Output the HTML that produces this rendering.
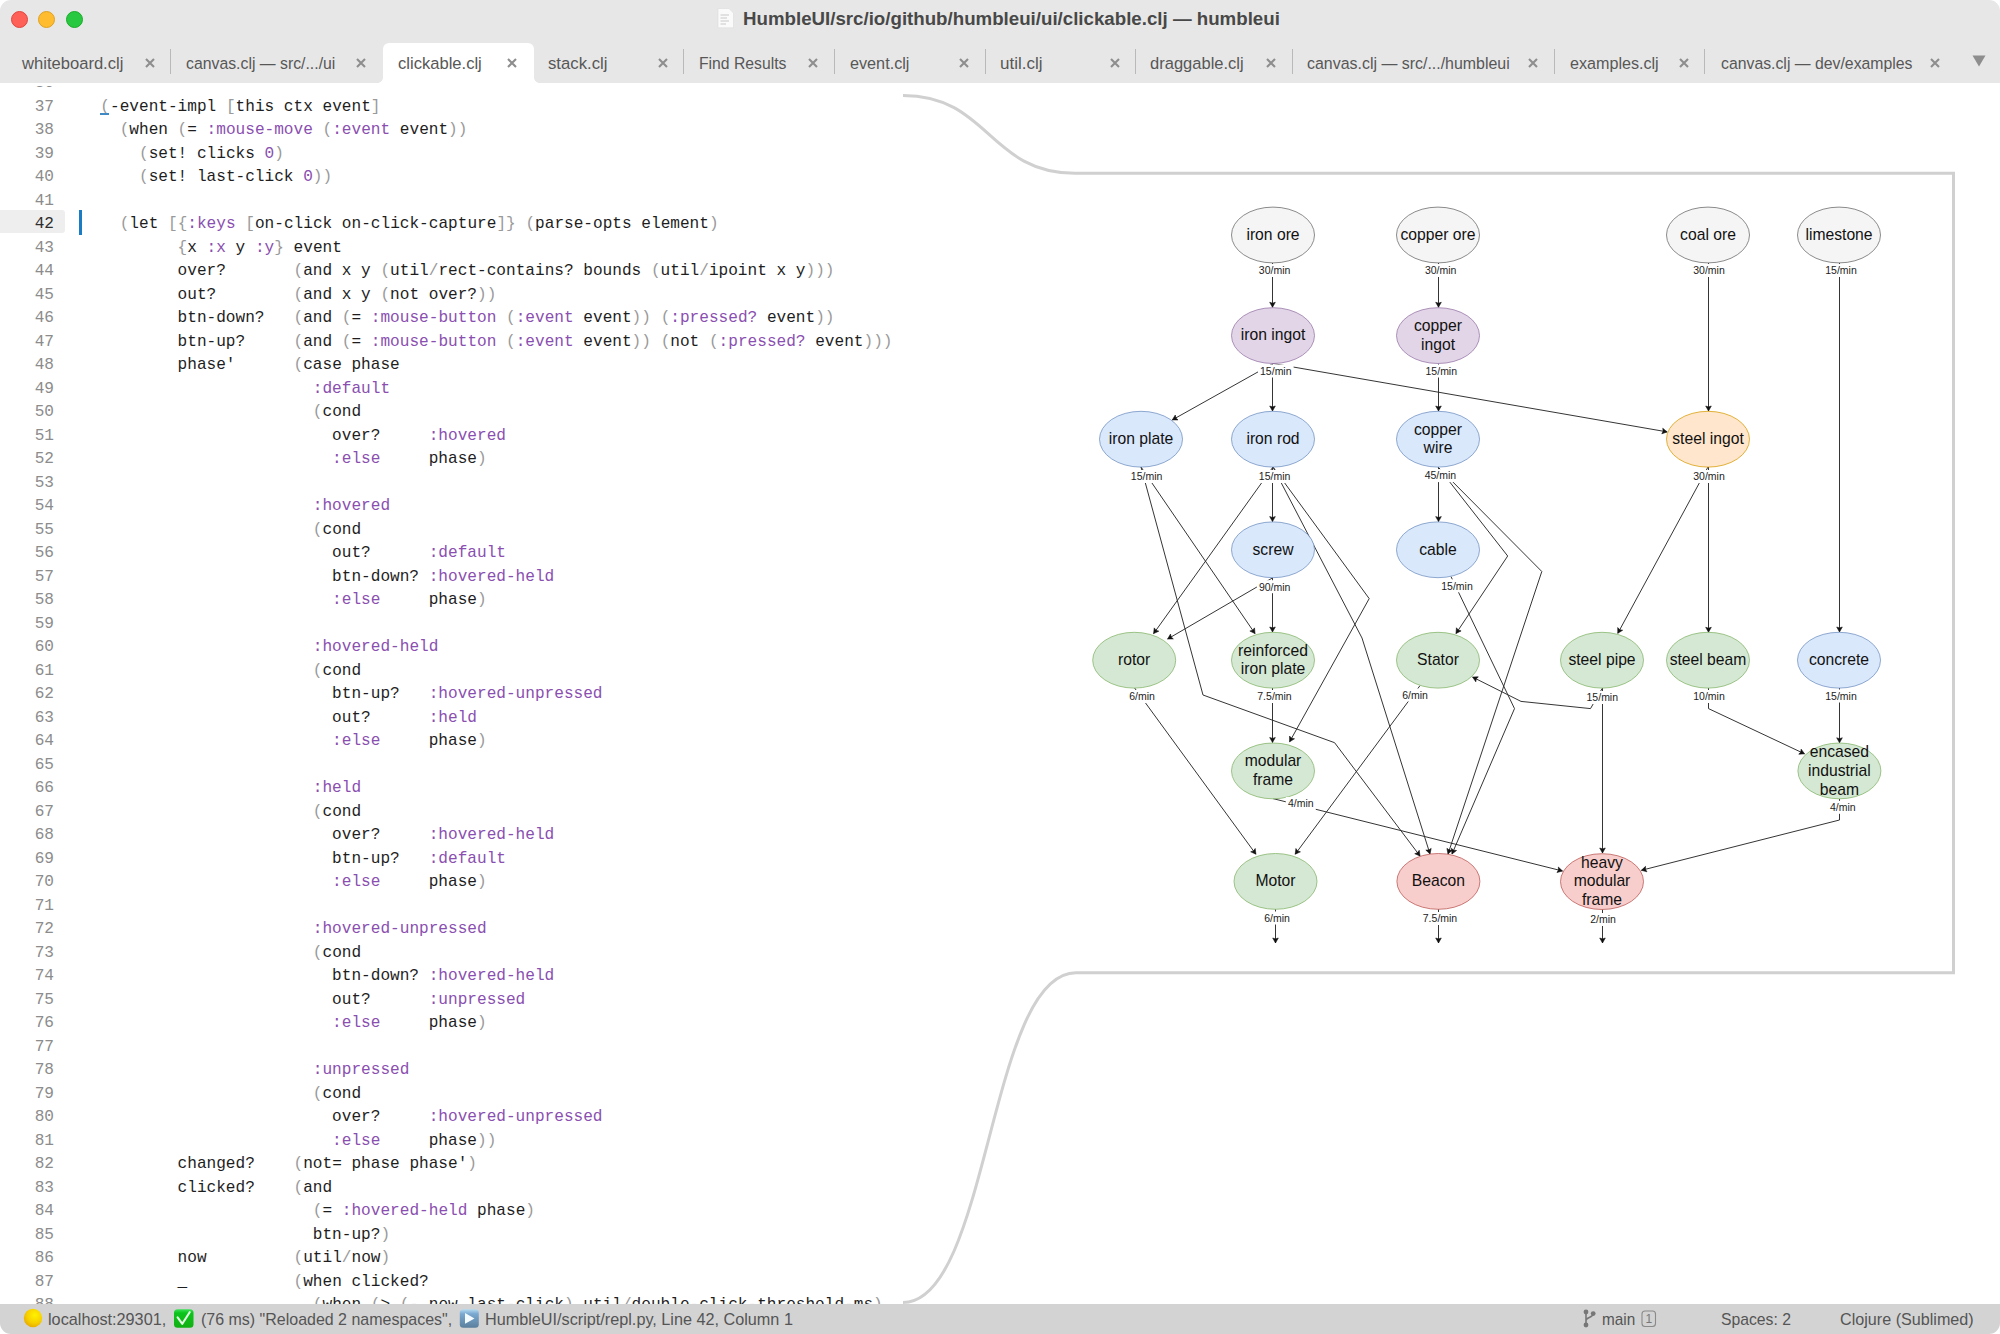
<!DOCTYPE html>
<html><head><meta charset="utf-8"><style>
*{margin:0;padding:0;box-sizing:border-box}
html,body{width:2000px;height:1334px;overflow:hidden;background:#fff}
body{position:relative;font-family:"Liberation Sans",sans-serif}
#top{position:absolute;z-index:1;left:0;top:0;width:2000px;height:83px;background:#e7e7e7;border-radius:11px 11px 0 0}
.dot{position:absolute;z-index:2;top:10.5px;width:17px;height:17px;border-radius:50%}
#title{position:absolute;z-index:2;top:8.5px;left:743px;font-weight:bold;font-size:17.6px;color:#484848;white-space:nowrap;letter-spacing:0;transform-origin:0 0;transform:scaleX(1.0622)}
.tt{position:absolute;z-index:2;top:53.5px;font-size:16.3px;color:#575757;white-space:nowrap;transform-origin:0 0}
.xs{position:absolute;z-index:2;top:57px}
.tx{position:absolute;z-index:2;top:54px;font-size:12px;color:#8a8a8a;width:12px;text-align:center;font-weight:bold}
.sep{position:absolute;z-index:2;top:49px;height:25px;width:1px;background:#b9b9b9}
#act{position:absolute;z-index:2;left:383px;top:43px;width:151px;height:41px;background:#fff;border-radius:6px 6px 0 0}
.ln{position:absolute;left:0;width:54px;text-align:right;font-family:"Liberation Mono",monospace;font-size:16.1px;line-height:23.5px;height:23.5px;color:#8c8c8c}
.cl{position:absolute;left:81px;font-family:"Liberation Mono",monospace;font-size:16.1px;line-height:23.5px;height:23.5px;color:#1e1e1e;white-space:pre}
.cl i{font-style:normal;color:#9a9a9a}
.cl b{font-weight:normal;color:#8a4fb0}
#hl42{position:absolute;left:0;top:210px;width:65px;height:23px;background:#eeeeee;border-radius:0 3px 3px 0}
.ln.act{color:#2e2e2e}
.ear{position:absolute;z-index:2;top:78px;width:5px;height:5px}
#caret{position:absolute;left:79px;top:210px;width:3px;height:25px;background:#1a7cc2}
#status{position:absolute;z-index:3;left:0;top:1304px;width:2000px;height:30px;background:#d3d3d3;border-radius:0 0 11px 11px}
.st{position:absolute;z-index:4;top:1310px;font-size:16.1px;color:#555;white-space:nowrap;transform-origin:0 0}
svg{position:absolute;left:0;top:0}
.ico{z-index:5}
#ul37{position:absolute;left:99.5px;top:113px;width:9.3px;height:1.8px;background:#3f8ac4;z-index:1}
#wstrip{position:absolute;left:0;top:83px;width:900px;height:2.6px;background:#fff;z-index:1}
</style></head><body>
<div id="top"></div><div id="wstrip"></div>
<div class="dot" style="left:10.5px;background:#fe5f57;border:0.5px solid #e0443e"></div>
<div class="dot" style="left:38.2px;background:#febc2e;border:0.5px solid #dea123"></div>
<div class="dot" style="left:65.8px;background:#28c840;border:0.5px solid #1aab29"></div>
<div id="title">HumbleUI/src/io/github/humbleui/ui/clickable.clj — humbleui</div>
<div id="act"></div><div class="ear" style="left:378px;background:radial-gradient(circle at 0 0,#e7e7e7 4.5px,#fff 5px)"></div><div class="ear" style="left:534px;background:radial-gradient(circle at 100% 0,#e7e7e7 4.5px,#fff 5px)"></div>
<div class="tt" style="left:22.1px;transform:scaleX(1.0185)">whiteboard.clj</div><svg class="xs" style="left:143.8px" width="12" height="12" viewBox="0 0 12 12"><path d="M2 2L10 10M10 2L2 10" stroke="#8e8e8e" stroke-width="2.1" stroke-linecap="butt"/></svg><div class="tt" style="left:186.0px;transform:scaleX(0.9709)">canvas.clj — src/.../ui</div><svg class="xs" style="left:355.2px" width="12" height="12" viewBox="0 0 12 12"><path d="M2 2L10 10M10 2L2 10" stroke="#8e8e8e" stroke-width="2.1" stroke-linecap="butt"/></svg><div class="tt" style="left:398.0px;transform:scaleX(1.0178)">clickable.clj</div><svg class="xs" style="left:505.7px" width="12" height="12" viewBox="0 0 12 12"><path d="M2 2L10 10M10 2L2 10" stroke="#8e8e8e" stroke-width="2.1" stroke-linecap="butt"/></svg><div class="tt" style="left:548.2px;transform:scaleX(1.0265)">stack.clj</div><svg class="xs" style="left:656.6px" width="12" height="12" viewBox="0 0 12 12"><path d="M2 2L10 10M10 2L2 10" stroke="#8e8e8e" stroke-width="2.1" stroke-linecap="butt"/></svg><div class="tt" style="left:698.9px;transform:scaleX(0.9659)">Find Results</div><svg class="xs" style="left:807.3px" width="12" height="12" viewBox="0 0 12 12"><path d="M2 2L10 10M10 2L2 10" stroke="#8e8e8e" stroke-width="2.1" stroke-linecap="butt"/></svg><div class="tt" style="left:849.9px;transform:scaleX(0.9951)">event.clj</div><svg class="xs" style="left:957.6px" width="12" height="12" viewBox="0 0 12 12"><path d="M2 2L10 10M10 2L2 10" stroke="#8e8e8e" stroke-width="2.1" stroke-linecap="butt"/></svg><div class="tt" style="left:1000.2px;transform:scaleX(1.0427)">util.clj</div><svg class="xs" style="left:1108.6px" width="12" height="12" viewBox="0 0 12 12"><path d="M2 2L10 10M10 2L2 10" stroke="#8e8e8e" stroke-width="2.1" stroke-linecap="butt"/></svg><div class="tt" style="left:1150.4px;transform:scaleX(1.0149)">draggable.clj</div><svg class="xs" style="left:1264.5px" width="12" height="12" viewBox="0 0 12 12"><path d="M2 2L10 10M10 2L2 10" stroke="#8e8e8e" stroke-width="2.1" stroke-linecap="butt"/></svg><div class="tt" style="left:1307.2px;transform:scaleX(0.9786)">canvas.clj — src/.../humbleui</div><svg class="xs" style="left:1527.2px" width="12" height="12" viewBox="0 0 12 12"><path d="M2 2L10 10M10 2L2 10" stroke="#8e8e8e" stroke-width="2.1" stroke-linecap="butt"/></svg><div class="tt" style="left:1569.8px;transform:scaleX(0.9902)">examples.clj</div><svg class="xs" style="left:1678.0px" width="12" height="12" viewBox="0 0 12 12"><path d="M2 2L10 10M10 2L2 10" stroke="#8e8e8e" stroke-width="2.1" stroke-linecap="butt"/></svg><div class="tt" style="left:1720.7px;transform:scaleX(0.9707)">canvas.clj — dev/examples</div><svg class="xs" style="left:1929.4px" width="12" height="12" viewBox="0 0 12 12"><path d="M2 2L10 10M10 2L2 10" stroke="#8e8e8e" stroke-width="2.1" stroke-linecap="butt"/></svg><div class="sep" style="left:170.3px"></div><div class="sep" style="left:683.2px"></div><div class="sep" style="left:833.5px"></div><div class="sep" style="left:984.8px"></div><div class="sep" style="left:1135.2px"></div><div class="sep" style="left:1291.5px"></div><div class="sep" style="left:1554.0px"></div><div class="sep" style="left:1704.1px"></div><svg class="xs" style="left:1972px;top:55px" width="14" height="12" viewBox="0 0 14 12"><path d="M0.5 0.5L13.5 0.5L7 11.5Z" fill="#8e8e8e"/></svg>
<div id="hl42"></div>
<div class="ln" style="top:72.1px">36</div><div class="ln" style="top:95.6px">37</div><div class="cl" style="top:95.6px">  <i>(</i>-event-impl <i>[</i>this ctx event<i>]</i></div><div class="ln" style="top:119.1px">38</div><div class="cl" style="top:119.1px">    <i>(</i>when <i>(</i>= <b>:mouse-move</b> <i>(</i><b>:event</b> event<i>)</i><i>)</i></div><div class="ln" style="top:142.6px">39</div><div class="cl" style="top:142.6px">      <i>(</i>set! clicks <b>0</b><i>)</i></div><div class="ln" style="top:166.1px">40</div><div class="cl" style="top:166.1px">      <i>(</i>set! last-click <b>0</b><i>)</i><i>)</i></div><div class="ln" style="top:189.6px">41</div><div class="cl" style="top:189.6px"></div><div class="ln act" style="top:213.1px">42</div><div class="cl" style="top:213.1px">    <i>(</i>let <i>[</i><i>{</i><b>:keys</b> <i>[</i>on-click on-click-capture<i>]</i><i>}</i> <i>(</i>parse-opts element<i>)</i></div><div class="ln" style="top:236.6px">43</div><div class="cl" style="top:236.6px">          <i>{</i>x <b>:x</b> y <b>:y</b><i>}</i> event</div><div class="ln" style="top:260.1px">44</div><div class="cl" style="top:260.1px">          over?       <i>(</i>and x y <i>(</i>util<i>/</i>rect-contains? bounds <i>(</i>util<i>/</i>ipoint x y<i>)</i><i>)</i><i>)</i></div><div class="ln" style="top:283.6px">45</div><div class="cl" style="top:283.6px">          out?        <i>(</i>and x y <i>(</i>not over?<i>)</i><i>)</i></div><div class="ln" style="top:307.1px">46</div><div class="cl" style="top:307.1px">          btn-down?   <i>(</i>and <i>(</i>= <b>:mouse-button</b> <i>(</i><b>:event</b> event<i>)</i><i>)</i> <i>(</i><b>:pressed?</b> event<i>)</i><i>)</i></div><div class="ln" style="top:330.6px">47</div><div class="cl" style="top:330.6px">          btn-up?     <i>(</i>and <i>(</i>= <b>:mouse-button</b> <i>(</i><b>:event</b> event<i>)</i><i>)</i> <i>(</i>not <i>(</i><b>:pressed?</b> event<i>)</i><i>)</i><i>)</i></div><div class="ln" style="top:354.1px">48</div><div class="cl" style="top:354.1px">          phase&#x27;      <i>(</i>case phase</div><div class="ln" style="top:377.6px">49</div><div class="cl" style="top:377.6px">                        <b>:default</b></div><div class="ln" style="top:401.1px">50</div><div class="cl" style="top:401.1px">                        <i>(</i>cond</div><div class="ln" style="top:424.6px">51</div><div class="cl" style="top:424.6px">                          over?     <b>:hovered</b></div><div class="ln" style="top:448.1px">52</div><div class="cl" style="top:448.1px">                          <b>:else</b>     phase<i>)</i></div><div class="ln" style="top:471.6px">53</div><div class="cl" style="top:471.6px"></div><div class="ln" style="top:495.1px">54</div><div class="cl" style="top:495.1px">                        <b>:hovered</b></div><div class="ln" style="top:518.6px">55</div><div class="cl" style="top:518.6px">                        <i>(</i>cond</div><div class="ln" style="top:542.1px">56</div><div class="cl" style="top:542.1px">                          out?      <b>:default</b></div><div class="ln" style="top:565.6px">57</div><div class="cl" style="top:565.6px">                          btn-down? <b>:hovered-held</b></div><div class="ln" style="top:589.1px">58</div><div class="cl" style="top:589.1px">                          <b>:else</b>     phase<i>)</i></div><div class="ln" style="top:612.6px">59</div><div class="cl" style="top:612.6px"></div><div class="ln" style="top:636.1px">60</div><div class="cl" style="top:636.1px">                        <b>:hovered-held</b></div><div class="ln" style="top:659.6px">61</div><div class="cl" style="top:659.6px">                        <i>(</i>cond</div><div class="ln" style="top:683.1px">62</div><div class="cl" style="top:683.1px">                          btn-up?   <b>:hovered-unpressed</b></div><div class="ln" style="top:706.6px">63</div><div class="cl" style="top:706.6px">                          out?      <b>:held</b></div><div class="ln" style="top:730.1px">64</div><div class="cl" style="top:730.1px">                          <b>:else</b>     phase<i>)</i></div><div class="ln" style="top:753.6px">65</div><div class="cl" style="top:753.6px"></div><div class="ln" style="top:777.1px">66</div><div class="cl" style="top:777.1px">                        <b>:held</b></div><div class="ln" style="top:800.6px">67</div><div class="cl" style="top:800.6px">                        <i>(</i>cond</div><div class="ln" style="top:824.1px">68</div><div class="cl" style="top:824.1px">                          over?     <b>:hovered-held</b></div><div class="ln" style="top:847.6px">69</div><div class="cl" style="top:847.6px">                          btn-up?   <b>:default</b></div><div class="ln" style="top:871.1px">70</div><div class="cl" style="top:871.1px">                          <b>:else</b>     phase<i>)</i></div><div class="ln" style="top:894.6px">71</div><div class="cl" style="top:894.6px"></div><div class="ln" style="top:918.1px">72</div><div class="cl" style="top:918.1px">                        <b>:hovered-unpressed</b></div><div class="ln" style="top:941.6px">73</div><div class="cl" style="top:941.6px">                        <i>(</i>cond</div><div class="ln" style="top:965.1px">74</div><div class="cl" style="top:965.1px">                          btn-down? <b>:hovered-held</b></div><div class="ln" style="top:988.6px">75</div><div class="cl" style="top:988.6px">                          out?      <b>:unpressed</b></div><div class="ln" style="top:1012.1px">76</div><div class="cl" style="top:1012.1px">                          <b>:else</b>     phase<i>)</i></div><div class="ln" style="top:1035.6px">77</div><div class="cl" style="top:1035.6px"></div><div class="ln" style="top:1059.1px">78</div><div class="cl" style="top:1059.1px">                        <b>:unpressed</b></div><div class="ln" style="top:1082.6px">79</div><div class="cl" style="top:1082.6px">                        <i>(</i>cond</div><div class="ln" style="top:1106.1px">80</div><div class="cl" style="top:1106.1px">                          over?     <b>:hovered-unpressed</b></div><div class="ln" style="top:1129.6px">81</div><div class="cl" style="top:1129.6px">                          <b>:else</b>     phase<i>)</i><i>)</i></div><div class="ln" style="top:1153.1px">82</div><div class="cl" style="top:1153.1px">          changed?    <i>(</i>not= phase phase&#x27;<i>)</i></div><div class="ln" style="top:1176.6px">83</div><div class="cl" style="top:1176.6px">          clicked?    <i>(</i>and</div><div class="ln" style="top:1200.1px">84</div><div class="cl" style="top:1200.1px">                        <i>(</i>= <b>:hovered-held</b> phase<i>)</i></div><div class="ln" style="top:1223.6px">85</div><div class="cl" style="top:1223.6px">                        btn-up?<i>)</i></div><div class="ln" style="top:1247.1px">86</div><div class="cl" style="top:1247.1px">          now         <i>(</i>util<i>/</i>now<i>)</i></div><div class="ln" style="top:1270.6px">87</div><div class="cl" style="top:1270.6px">          _           <i>(</i>when clicked?</div><div class="ln" style="top:1294.1px">88</div><div class="cl" style="top:1294.1px">                        <i>(</i>when <i>(</i>&gt; <i>(</i>- now last-click<i>)</i> util<i>/</i>double-click-threshold-ms<i>)</i></div>
<div id="caret"></div>
<svg width="2000" height="1334" viewBox="0 0 2000 1334">
<path d="M903 95.5 C989 95.5 989 173.3 1075 173.3 L1953.5 173.3 L1953.5 972.8 L1076 972.8 C989 972.8 989 1302.5 903 1302.5" fill="none" stroke="#d0d0d0" stroke-width="3"/>
<path d="M1272.5 263.0 L1272.5 307.3" fill="none" stroke="#2a2a2a" stroke-width="0.95"/>
<path d="M1272.50 307.30 L1269.70 302.30 L1272.50 303.20 L1275.30 302.30 Z" fill="#111" stroke="#111" stroke-width="0.6"/>
<path d="M1438.5 263.0 L1438.5 307.3" fill="none" stroke="#2a2a2a" stroke-width="0.95"/>
<path d="M1438.50 307.30 L1435.70 302.30 L1438.50 303.20 L1441.30 302.30 Z" fill="#111" stroke="#111" stroke-width="0.6"/>
<path d="M1708.5 263.0 L1708.5 411.0" fill="none" stroke="#2a2a2a" stroke-width="0.95"/>
<path d="M1708.50 411.00 L1705.70 406.00 L1708.50 406.90 L1711.30 406.00 Z" fill="#111" stroke="#111" stroke-width="0.6"/>
<path d="M1839.5 263.0 L1839.5 632.0" fill="none" stroke="#2a2a2a" stroke-width="0.95"/>
<path d="M1839.50 632.00 L1836.70 627.00 L1839.50 627.90 L1842.30 627.00 Z" fill="#111" stroke="#111" stroke-width="0.6"/>
<path d="M1273.0 363.5 L1172.3 419.9" fill="none" stroke="#2a2a2a" stroke-width="0.95"/>
<path d="M1172.30 419.90 L1175.29 415.01 L1175.88 417.90 L1178.03 419.90 Z" fill="#111" stroke="#111" stroke-width="0.6"/>
<path d="M1272.5 363.5 L1272.5 411.0" fill="none" stroke="#2a2a2a" stroke-width="0.95"/>
<path d="M1272.50 411.00 L1269.70 406.00 L1272.50 406.90 L1275.30 406.00 Z" fill="#111" stroke="#111" stroke-width="0.6"/>
<path d="M1273.0 363.5 L1667.2 431.9" fill="none" stroke="#2a2a2a" stroke-width="0.95"/>
<path d="M1667.20 431.90 L1661.79 433.80 L1663.16 431.20 L1662.75 428.29 Z" fill="#111" stroke="#111" stroke-width="0.6"/>
<path d="M1438.5 363.5 L1438.5 411.0" fill="none" stroke="#2a2a2a" stroke-width="0.95"/>
<path d="M1438.50 411.00 L1435.70 406.00 L1438.50 406.90 L1441.30 406.00 Z" fill="#111" stroke="#111" stroke-width="0.6"/>
<path d="M1141.0 467.0 L1255.0 633.6" fill="none" stroke="#2a2a2a" stroke-width="0.95"/>
<path d="M1255.00 633.60 L1249.87 631.05 L1252.68 630.22 L1254.49 627.89 Z" fill="#111" stroke="#111" stroke-width="0.6"/>
<path d="M1141.0 467.0 L1203.0 695.0 L1334.6 742.7 L1420.0 856.0" fill="none" stroke="#2a2a2a" stroke-width="0.95"/>
<path d="M1420.00 856.00 L1414.75 853.69 L1417.53 852.73 L1419.23 850.32 Z" fill="#111" stroke="#111" stroke-width="0.6"/>
<path d="M1272.5 467.0 L1272.5 521.6" fill="none" stroke="#2a2a2a" stroke-width="0.95"/>
<path d="M1272.50 521.60 L1269.70 516.60 L1272.50 517.50 L1275.30 516.60 Z" fill="#111" stroke="#111" stroke-width="0.6"/>
<path d="M1273.0 467.0 L1153.6 633.6" fill="none" stroke="#2a2a2a" stroke-width="0.95"/>
<path d="M1153.60 633.60 L1154.24 627.90 L1155.99 630.27 L1158.79 631.17 Z" fill="#111" stroke="#111" stroke-width="0.6"/>
<path d="M1273.0 467.0 L1369.2 598.6 L1289.6 741.8" fill="none" stroke="#2a2a2a" stroke-width="0.95"/>
<path d="M1289.60 741.80 L1289.58 736.07 L1291.59 738.22 L1294.48 738.79 Z" fill="#111" stroke="#111" stroke-width="0.6"/>
<path d="M1273.0 467.0 L1362.0 638.0 L1430.0 854.0" fill="none" stroke="#2a2a2a" stroke-width="0.95"/>
<path d="M1430.00 854.00 L1425.83 850.07 L1428.77 850.09 L1431.17 848.39 Z" fill="#111" stroke="#111" stroke-width="0.6"/>
<path d="M1438.5 467.0 L1438.5 521.6" fill="none" stroke="#2a2a2a" stroke-width="0.95"/>
<path d="M1438.50 521.60 L1435.70 516.60 L1438.50 517.50 L1441.30 516.60 Z" fill="#111" stroke="#111" stroke-width="0.6"/>
<path d="M1438.0 467.0 L1507.7 556.0 L1456.0 633.5" fill="none" stroke="#2a2a2a" stroke-width="0.95"/>
<path d="M1456.00 633.50 L1456.45 627.79 L1458.28 630.09 L1461.10 630.89 Z" fill="#111" stroke="#111" stroke-width="0.6"/>
<path d="M1438.0 467.0 L1541.8 571.5 L1448.0 854.0" fill="none" stroke="#2a2a2a" stroke-width="0.95"/>
<path d="M1448.00 854.00 L1446.92 848.37 L1449.29 850.11 L1452.23 850.14 Z" fill="#111" stroke="#111" stroke-width="0.6"/>
<path d="M1708.0 467.0 L1617.8 633.3" fill="none" stroke="#2a2a2a" stroke-width="0.95"/>
<path d="M1617.80 633.30 L1617.72 627.57 L1619.75 629.70 L1622.65 630.24 Z" fill="#111" stroke="#111" stroke-width="0.6"/>
<path d="M1708.5 467.0 L1708.5 632.3" fill="none" stroke="#2a2a2a" stroke-width="0.95"/>
<path d="M1708.50 632.30 L1705.70 627.30 L1708.50 628.20 L1711.30 627.30 Z" fill="#111" stroke="#111" stroke-width="0.6"/>
<path d="M1272.5 577.6 L1272.5 632.0" fill="none" stroke="#2a2a2a" stroke-width="0.95"/>
<path d="M1272.50 632.00 L1269.70 627.00 L1272.50 627.90 L1275.30 627.00 Z" fill="#111" stroke="#111" stroke-width="0.6"/>
<path d="M1273.0 577.6 L1167.6 639.0" fill="none" stroke="#2a2a2a" stroke-width="0.95"/>
<path d="M1167.60 639.00 L1170.51 634.06 L1171.14 636.94 L1173.33 638.90 Z" fill="#111" stroke="#111" stroke-width="0.6"/>
<path d="M1451.0 576.6 L1514.5 708.6 L1452.0 854.0" fill="none" stroke="#2a2a2a" stroke-width="0.95"/>
<path d="M1452.00 854.00 L1451.40 848.30 L1453.62 850.23 L1456.55 850.51 Z" fill="#111" stroke="#111" stroke-width="0.6"/>
<path d="M1134.6 688.0 L1255.9 854.2" fill="none" stroke="#2a2a2a" stroke-width="0.95"/>
<path d="M1255.90 854.20 L1250.69 851.81 L1253.48 850.89 L1255.21 848.51 Z" fill="#111" stroke="#111" stroke-width="0.6"/>
<path d="M1272.5 688.0 L1272.5 742.5" fill="none" stroke="#2a2a2a" stroke-width="0.95"/>
<path d="M1272.50 742.50 L1269.70 737.50 L1272.50 738.40 L1275.30 737.50 Z" fill="#111" stroke="#111" stroke-width="0.6"/>
<path d="M1420.0 685.6 L1295.2 854.2" fill="none" stroke="#2a2a2a" stroke-width="0.95"/>
<path d="M1295.20 854.20 L1295.92 848.52 L1297.64 850.90 L1300.43 851.85 Z" fill="#111" stroke="#111" stroke-width="0.6"/>
<path d="M1602.2 688.4 L1590.5 708.6 L1521.0 701.4 L1472.6 677.1" fill="none" stroke="#2a2a2a" stroke-width="0.95"/>
<path d="M1472.60 677.10 L1478.32 676.84 L1476.26 678.94 L1475.81 681.85 Z" fill="#111" stroke="#111" stroke-width="0.6"/>
<path d="M1602.5 688.0 L1602.5 853.0" fill="none" stroke="#2a2a2a" stroke-width="0.95"/>
<path d="M1602.50 853.00 L1599.70 848.00 L1602.50 848.90 L1605.30 848.00 Z" fill="#111" stroke="#111" stroke-width="0.6"/>
<path d="M1708.5 688.0 L1708.5 708.6 L1804.5 753.8" fill="none" stroke="#2a2a2a" stroke-width="0.95"/>
<path d="M1804.50 753.80 L1798.78 754.20 L1800.79 752.05 L1801.17 749.14 Z" fill="#111" stroke="#111" stroke-width="0.6"/>
<path d="M1839.5 688.0 L1839.5 742.8" fill="none" stroke="#2a2a2a" stroke-width="0.95"/>
<path d="M1839.50 742.80 L1836.70 737.80 L1839.50 738.70 L1842.30 737.80 Z" fill="#111" stroke="#111" stroke-width="0.6"/>
<path d="M1273.0 798.6 L1562.5 871.0" fill="none" stroke="#2a2a2a" stroke-width="0.95"/>
<path d="M1562.50 871.00 L1556.97 872.50 L1558.52 870.01 L1558.33 867.07 Z" fill="#111" stroke="#111" stroke-width="0.6"/>
<path d="M1839.5 798.8 L1839.5 820.0 L1641.4 870.3" fill="none" stroke="#2a2a2a" stroke-width="0.95"/>
<path d="M1641.40 870.30 L1645.56 866.36 L1645.37 869.29 L1646.94 871.78 Z" fill="#111" stroke="#111" stroke-width="0.6"/>
<path d="M1275.5 909.2 L1275.5 943.0" fill="none" stroke="#2a2a2a" stroke-width="0.95"/>
<path d="M1275.50 943.00 L1272.70 938.00 L1275.50 938.90 L1278.30 938.00 Z" fill="#111" stroke="#111" stroke-width="0.6"/>
<path d="M1438.5 909.2 L1438.5 943.0" fill="none" stroke="#2a2a2a" stroke-width="0.95"/>
<path d="M1438.50 943.00 L1435.70 938.00 L1438.50 938.90 L1441.30 938.00 Z" fill="#111" stroke="#111" stroke-width="0.6"/>
<path d="M1602.5 909.5 L1602.5 943.0" fill="none" stroke="#2a2a2a" stroke-width="0.95"/>
<path d="M1602.50 943.00 L1599.70 938.00 L1602.50 938.90 L1605.30 938.00 Z" fill="#111" stroke="#111" stroke-width="0.6"/>
<ellipse cx="1273.0" cy="235.0" rx="41.5" ry="27.9" fill="#f5f5f5" stroke="#666666" stroke-width="0.75"/>
<text x="1273.0" y="239.8" font-family="Liberation Sans" font-size="15.7" text-anchor="middle" fill="#111">iron ore</text>
<ellipse cx="1438.0" cy="235.0" rx="41.5" ry="27.9" fill="#f5f5f5" stroke="#666666" stroke-width="0.75"/>
<text x="1438.0" y="239.8" font-family="Liberation Sans" font-size="15.7" text-anchor="middle" fill="#111">copper ore</text>
<ellipse cx="1708.0" cy="235.0" rx="41.5" ry="27.9" fill="#f5f5f5" stroke="#666666" stroke-width="0.75"/>
<text x="1708.0" y="239.8" font-family="Liberation Sans" font-size="15.7" text-anchor="middle" fill="#111">coal ore</text>
<ellipse cx="1839.0" cy="235.0" rx="41.5" ry="27.9" fill="#f5f5f5" stroke="#666666" stroke-width="0.75"/>
<text x="1839.0" y="239.8" font-family="Liberation Sans" font-size="15.7" text-anchor="middle" fill="#111">limestone</text>
<ellipse cx="1273.0" cy="335.6" rx="41.5" ry="27.9" fill="#e1d5e7" stroke="#9673a6" stroke-width="0.75"/>
<text x="1273.0" y="340.4" font-family="Liberation Sans" font-size="15.7" text-anchor="middle" fill="#111">iron ingot</text>
<ellipse cx="1438.0" cy="335.6" rx="41.5" ry="27.9" fill="#e1d5e7" stroke="#9673a6" stroke-width="0.75"/>
<text x="1438.0" y="331.0" font-family="Liberation Sans" font-size="15.7" text-anchor="middle" fill="#111">copper</text>
<text x="1438.0" y="349.8" font-family="Liberation Sans" font-size="15.7" text-anchor="middle" fill="#111">ingot</text>
<ellipse cx="1141.0" cy="439.2" rx="41.5" ry="27.9" fill="#dae8fc" stroke="#6c8ebf" stroke-width="0.75"/>
<text x="1141.0" y="444.0" font-family="Liberation Sans" font-size="15.7" text-anchor="middle" fill="#111">iron plate</text>
<ellipse cx="1273.0" cy="439.2" rx="41.5" ry="27.9" fill="#dae8fc" stroke="#6c8ebf" stroke-width="0.75"/>
<text x="1273.0" y="444.0" font-family="Liberation Sans" font-size="15.7" text-anchor="middle" fill="#111">iron rod</text>
<ellipse cx="1438.0" cy="439.2" rx="41.5" ry="27.9" fill="#dae8fc" stroke="#6c8ebf" stroke-width="0.75"/>
<text x="1438.0" y="434.6" font-family="Liberation Sans" font-size="15.7" text-anchor="middle" fill="#111">copper</text>
<text x="1438.0" y="453.4" font-family="Liberation Sans" font-size="15.7" text-anchor="middle" fill="#111">wire</text>
<ellipse cx="1708.0" cy="439.2" rx="41.5" ry="27.9" fill="#ffe6cc" stroke="#d79b00" stroke-width="0.75"/>
<text x="1708.0" y="444.0" font-family="Liberation Sans" font-size="15.7" text-anchor="middle" fill="#111">steel ingot</text>
<ellipse cx="1273.0" cy="549.8" rx="41.5" ry="27.9" fill="#dae8fc" stroke="#6c8ebf" stroke-width="0.75"/>
<text x="1273.0" y="554.6" font-family="Liberation Sans" font-size="15.7" text-anchor="middle" fill="#111">screw</text>
<ellipse cx="1438.0" cy="549.8" rx="41.5" ry="27.9" fill="#dae8fc" stroke="#6c8ebf" stroke-width="0.75"/>
<text x="1438.0" y="554.6" font-family="Liberation Sans" font-size="15.7" text-anchor="middle" fill="#111">cable</text>
<ellipse cx="1134.2" cy="660.2" rx="41.5" ry="27.9" fill="#d5e8d4" stroke="#82b366" stroke-width="0.75"/>
<text x="1134.2" y="665.0" font-family="Liberation Sans" font-size="15.7" text-anchor="middle" fill="#111">rotor</text>
<ellipse cx="1273.0" cy="660.2" rx="41.5" ry="27.9" fill="#d5e8d4" stroke="#82b366" stroke-width="0.75"/>
<text x="1273.0" y="655.6" font-family="Liberation Sans" font-size="15.7" text-anchor="middle" fill="#111">reinforced</text>
<text x="1273.0" y="674.4" font-family="Liberation Sans" font-size="15.7" text-anchor="middle" fill="#111">iron plate</text>
<ellipse cx="1438.0" cy="660.2" rx="41.5" ry="27.9" fill="#d5e8d4" stroke="#82b366" stroke-width="0.75"/>
<text x="1438.0" y="665.0" font-family="Liberation Sans" font-size="15.7" text-anchor="middle" fill="#111">Stator</text>
<ellipse cx="1602.0" cy="660.2" rx="41.5" ry="27.9" fill="#d5e8d4" stroke="#82b366" stroke-width="0.75"/>
<text x="1602.0" y="665.0" font-family="Liberation Sans" font-size="15.7" text-anchor="middle" fill="#111">steel pipe</text>
<ellipse cx="1708.0" cy="660.2" rx="41.5" ry="27.9" fill="#d5e8d4" stroke="#82b366" stroke-width="0.75"/>
<text x="1708.0" y="665.0" font-family="Liberation Sans" font-size="15.7" text-anchor="middle" fill="#111">steel beam</text>
<ellipse cx="1839.0" cy="660.2" rx="41.5" ry="27.9" fill="#dae8fc" stroke="#6c8ebf" stroke-width="0.75"/>
<text x="1839.0" y="665.0" font-family="Liberation Sans" font-size="15.7" text-anchor="middle" fill="#111">concrete</text>
<ellipse cx="1273.0" cy="770.9" rx="41.5" ry="27.9" fill="#d5e8d4" stroke="#82b366" stroke-width="0.75"/>
<text x="1273.0" y="766.3" font-family="Liberation Sans" font-size="15.7" text-anchor="middle" fill="#111">modular</text>
<text x="1273.0" y="785.1" font-family="Liberation Sans" font-size="15.7" text-anchor="middle" fill="#111">frame</text>
<ellipse cx="1839.4" cy="770.9" rx="41.5" ry="27.9" fill="#d5e8d4" stroke="#82b366" stroke-width="0.75"/>
<text x="1839.4" y="756.9" font-family="Liberation Sans" font-size="15.7" text-anchor="middle" fill="#111">encased</text>
<text x="1839.4" y="775.7" font-family="Liberation Sans" font-size="15.7" text-anchor="middle" fill="#111">industrial</text>
<text x="1839.4" y="794.5" font-family="Liberation Sans" font-size="15.7" text-anchor="middle" fill="#111">beam</text>
<ellipse cx="1275.5" cy="881.4" rx="41.5" ry="27.9" fill="#d5e8d4" stroke="#82b366" stroke-width="0.75"/>
<text x="1275.5" y="886.2" font-family="Liberation Sans" font-size="15.7" text-anchor="middle" fill="#111">Motor</text>
<ellipse cx="1438.4" cy="881.4" rx="41.5" ry="27.9" fill="#f8cecc" stroke="#b85450" stroke-width="0.75"/>
<text x="1438.4" y="886.2" font-family="Liberation Sans" font-size="15.7" text-anchor="middle" fill="#111">Beacon</text>
<ellipse cx="1602.0" cy="881.6" rx="41.5" ry="27.9" fill="#f8cecc" stroke="#b85450" stroke-width="0.75"/>
<text x="1602.0" y="867.6" font-family="Liberation Sans" font-size="15.7" text-anchor="middle" fill="#111">heavy</text>
<text x="1602.0" y="886.4" font-family="Liberation Sans" font-size="15.7" text-anchor="middle" fill="#111">modular</text>
<text x="1602.0" y="905.2" font-family="Liberation Sans" font-size="15.7" text-anchor="middle" fill="#111">frame</text>
<rect x="1256.8" y="264.0" width="35.6" height="13" fill="#fff"/>
<text x="1274.6" y="274.3" font-family="Liberation Sans" font-size="10.5" text-anchor="middle" fill="#222">30/min</text>
<rect x="1422.9" y="264.0" width="35.6" height="13" fill="#fff"/>
<text x="1440.7" y="274.3" font-family="Liberation Sans" font-size="10.5" text-anchor="middle" fill="#222">30/min</text>
<rect x="1691.2" y="264.0" width="35.6" height="13" fill="#fff"/>
<text x="1709.0" y="274.3" font-family="Liberation Sans" font-size="10.5" text-anchor="middle" fill="#222">30/min</text>
<rect x="1823.2" y="264.0" width="35.6" height="13" fill="#fff"/>
<text x="1841.0" y="274.3" font-family="Liberation Sans" font-size="10.5" text-anchor="middle" fill="#222">15/min</text>
<rect x="1258.0" y="364.5" width="35.6" height="13" fill="#fff"/>
<text x="1275.8" y="374.8" font-family="Liberation Sans" font-size="10.5" text-anchor="middle" fill="#222">15/min</text>
<rect x="1423.5" y="364.5" width="35.6" height="13" fill="#fff"/>
<text x="1441.3" y="374.8" font-family="Liberation Sans" font-size="10.5" text-anchor="middle" fill="#222">15/min</text>
<rect x="1128.8" y="470.0" width="35.6" height="13" fill="#fff"/>
<text x="1146.6" y="480.3" font-family="Liberation Sans" font-size="10.5" text-anchor="middle" fill="#222">15/min</text>
<rect x="1256.8" y="470.0" width="35.6" height="13" fill="#fff"/>
<text x="1274.6" y="480.3" font-family="Liberation Sans" font-size="10.5" text-anchor="middle" fill="#222">15/min</text>
<rect x="1422.6" y="469.1" width="35.6" height="13" fill="#fff"/>
<text x="1440.4" y="479.4" font-family="Liberation Sans" font-size="10.5" text-anchor="middle" fill="#222">45/min</text>
<rect x="1691.2" y="470.0" width="35.6" height="13" fill="#fff"/>
<text x="1709.0" y="480.3" font-family="Liberation Sans" font-size="10.5" text-anchor="middle" fill="#222">30/min</text>
<rect x="1256.9" y="580.2" width="35.6" height="13" fill="#fff"/>
<text x="1274.7" y="590.5" font-family="Liberation Sans" font-size="10.5" text-anchor="middle" fill="#222">90/min</text>
<rect x="1439.2" y="579.3" width="35.6" height="13" fill="#fff"/>
<text x="1457.0" y="589.6" font-family="Liberation Sans" font-size="10.5" text-anchor="middle" fill="#222">15/min</text>
<rect x="1127.0" y="690.0" width="30.0" height="13" fill="#fff"/>
<text x="1142.0" y="700.3" font-family="Liberation Sans" font-size="10.5" text-anchor="middle" fill="#222">6/min</text>
<rect x="1253.9" y="690.0" width="41.2" height="13" fill="#fff"/>
<text x="1274.5" y="700.3" font-family="Liberation Sans" font-size="10.5" text-anchor="middle" fill="#222">7.5/min</text>
<rect x="1400.0" y="688.5" width="30.0" height="13" fill="#fff"/>
<text x="1415.0" y="698.8" font-family="Liberation Sans" font-size="10.5" text-anchor="middle" fill="#222">6/min</text>
<rect x="1584.5" y="691.0" width="35.6" height="13" fill="#fff"/>
<text x="1602.3" y="701.3" font-family="Liberation Sans" font-size="10.5" text-anchor="middle" fill="#222">15/min</text>
<rect x="1691.2" y="690.0" width="35.6" height="13" fill="#fff"/>
<text x="1709.0" y="700.3" font-family="Liberation Sans" font-size="10.5" text-anchor="middle" fill="#222">10/min</text>
<rect x="1823.2" y="689.5" width="35.6" height="13" fill="#fff"/>
<text x="1841.0" y="699.8" font-family="Liberation Sans" font-size="10.5" text-anchor="middle" fill="#222">15/min</text>
<rect x="1285.8" y="797.1" width="30.0" height="13" fill="#fff"/>
<text x="1300.8" y="807.4" font-family="Liberation Sans" font-size="10.5" text-anchor="middle" fill="#222">4/min</text>
<rect x="1827.8" y="800.8" width="30.0" height="13" fill="#fff"/>
<text x="1842.8" y="811.1" font-family="Liberation Sans" font-size="10.5" text-anchor="middle" fill="#222">4/min</text>
<rect x="1262.0" y="911.5" width="30.0" height="13" fill="#fff"/>
<text x="1277.0" y="921.8" font-family="Liberation Sans" font-size="10.5" text-anchor="middle" fill="#222">6/min</text>
<rect x="1419.4" y="912.0" width="41.2" height="13" fill="#fff"/>
<text x="1440.0" y="922.3" font-family="Liberation Sans" font-size="10.5" text-anchor="middle" fill="#222">7.5/min</text>
<rect x="1588.0" y="913.0" width="30.0" height="13" fill="#fff"/>
<text x="1603.0" y="923.3" font-family="Liberation Sans" font-size="10.5" text-anchor="middle" fill="#222">2/min</text>
</svg>
<div id="status"></div>
<div class="st" style="left:48.2px;font-size:16.1px;transform:scaleX(1.0085)">localhost:29301,</div><div class="st" style="left:200.8px;font-size:16.1px;transform:scaleX(0.9929)">(76 ms) &quot;Reloaded 2 namespaces&quot;,</div><div class="st" style="left:484.5px;font-size:16.1px;transform:scaleX(1.0075)">HumbleUI/script/repl.py, Line 42, Column 1</div><div class="st" style="left:1602.0px;font-size:16.1px;transform:scaleX(0.9529)">main</div><div class="st" style="left:1720.5px;font-size:16.1px;transform:scaleX(0.9777)">Spaces: 2</div><div class="st" style="left:1839.5px;font-size:16.1px;transform:scaleX(1.0033)">Clojure (Sublimed)</div>

<svg class="ico" style="left:23px;top:1308px" width="20" height="20" viewBox="0 0 20 20"><defs><radialGradient id="yg" cx="0.6" cy="0.35" r="0.7"><stop offset="0" stop-color="#fff200"/><stop offset="0.6" stop-color="#f7d000"/><stop offset="1" stop-color="#e6a800"/></radialGradient></defs><circle cx="10" cy="10" r="9.2" fill="url(#yg)"/></svg>
<svg class="ico" style="left:173px;top:1308px" width="22" height="21" viewBox="0 0 22 21"><defs><linearGradient id="gg" x1="0" y1="0" x2="0" y2="1"><stop offset="0" stop-color="#3fe35a"/><stop offset="0.2" stop-color="#0cc41c"/><stop offset="1" stop-color="#12b012"/></linearGradient></defs><rect x="1" y="1.2" width="19.5" height="18.6" rx="3.5" fill="url(#gg)"/><path d="M4.6 9.4L9.3 15.8L16.7 4.2" fill="none" stroke="#e4ffe4" stroke-width="2.1" stroke-linecap="round" stroke-linejoin="round"/></svg>
<svg class="ico" style="left:459px;top:1308px" width="21" height="21" viewBox="0 0 21 21"><defs><linearGradient id="bg" x1="0" y1="0" x2="0" y2="1"><stop offset="0" stop-color="#b6dcf2"/><stop offset="0.25" stop-color="#7aa8d0"/><stop offset="1" stop-color="#5a7f9c"/></linearGradient></defs><rect x="0.8" y="1.2" width="19" height="18.6" rx="3.5" fill="url(#bg)"/><path d="M6 5L6 15.8L15.5 10.4Z" fill="#f4fbff"/></svg>
<svg class="ico" style="left:1580px;top:1308px" width="20" height="22" viewBox="0 0 20 22"><g fill="#777"><circle cx="6" cy="4" r="2.4"/><circle cx="13.2" cy="5.6" r="2.4"/><circle cx="6" cy="17" r="2.4"/></g><path d="M6 4L6 17M13.2 5.6C13.2 10 6 9 6 12.5" fill="none" stroke="#777" stroke-width="1.6"/></svg>
<svg class="ico" style="left:1641px;top:1310px" width="16" height="18" viewBox="0 0 16 18"><rect x="1" y="1" width="13.5" height="15.5" rx="3" fill="none" stroke="#8a8a8a" stroke-width="1.1"/><text x="7.8" y="13.2" font-family="Liberation Sans" font-size="12" text-anchor="middle" fill="#777">1</text></svg>
<svg class="ico" style="left:717px;top:8px;z-index:3" width="18" height="21" viewBox="0 0 18 21"><path d="M1 0.5L12 0.5L16.5 5L16.5 19.8L1 19.8Z" fill="#fafafa" stroke="#dcdcdc" stroke-width="0.6"/><g stroke="#c8c8c8" stroke-width="1"><path d="M3.5 7H12M3.5 10H10M3.5 13H12M3.5 16H9"/></g></svg>
<div id="ul37"></div>

</body></html>
